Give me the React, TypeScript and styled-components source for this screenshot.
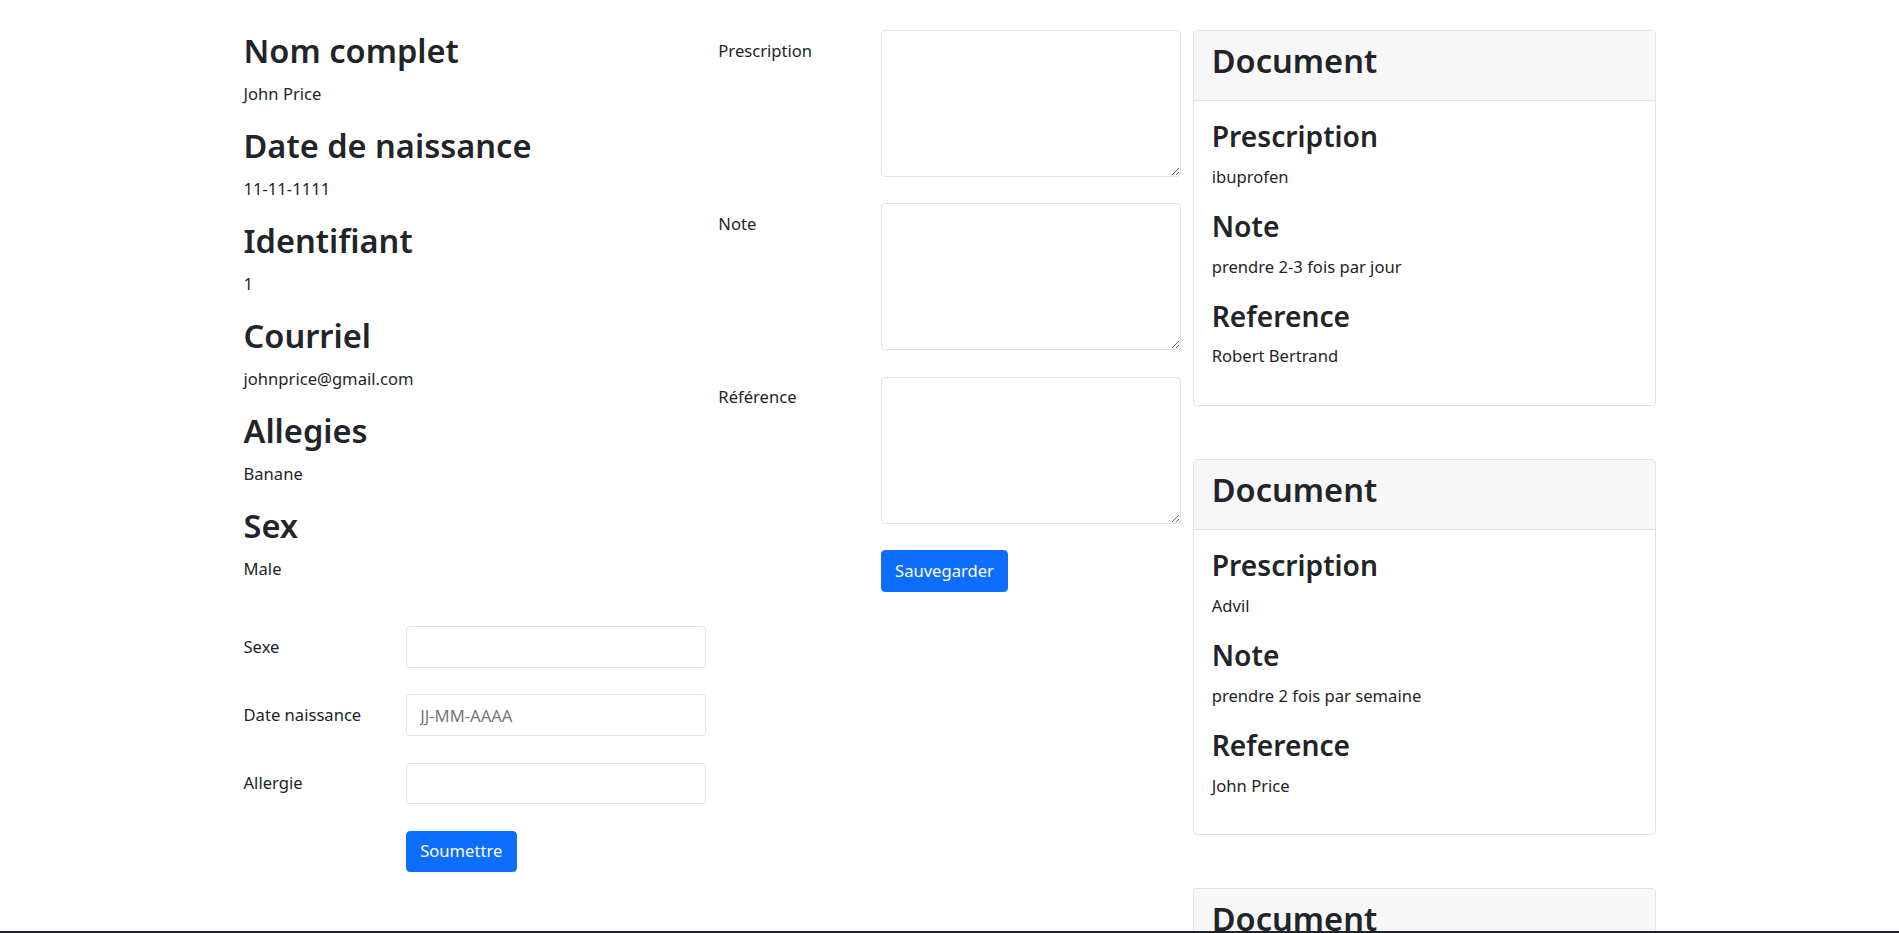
import React from 'react';
import styled, { createGlobalStyle } from 'styled-components';

const GlobalStyle = createGlobalStyle`
  *, *::before, *::after {
    box-sizing: border-box;
  }
  html, body {
    margin: 0;
    padding: 0;
    overflow: hidden;
    background: #fff;
  }
  body {
    font-family: 'Noto Sans', 'Open Sans', sans-serif;
    font-size: 16.6px;
    line-height: 26.4px;
    color: #212529;
  }
`;

const patient = [
  { title: 'Nom complet', value: 'John Price' },
  { title: 'Date de naissance', value: '11-11-1111' },
  { title: 'Identifiant', value: '1' },
  { title: 'Courriel', value: 'johnprice@gmail.com' },
  { title: 'Allegies', value: 'Banane' },
  { title: 'Sex', value: 'Male' },
];

const documents = [
  { prescription: 'ibuprofen', note: 'prendre 2-3 fois par jour', reference: 'Robert Bertrand' },
  { prescription: 'Advil', note: 'prendre 2 fois par semaine', reference: 'John Price' },
  { prescription: 'Tylenol', note: 'prendre 1 fois par jour', reference: 'Robert Bertrand' },
];

const App: React.FC = () => {
  return (
    <>
      <GlobalStyle />
      <Page>
        <Column>
          {patient.map((p) => (
            <section key={p.title}>
              <InfoTitle>{p.title}</InfoTitle>
              <InfoValue>{p.value}</InfoValue>
            </section>
          ))}
          <Form>
            <FormRow>
              <Label htmlFor="sexe">Sexe</Label>
              <Input id="sexe" type="text" />
            </FormRow>
            <FormRow>
              <Label htmlFor="naissance">Date naissance</Label>
              <Input id="naissance" type="text" placeholder="JJ-MM-AAAA" />
            </FormRow>
            <FormRow>
              <Label htmlFor="allergie">Allergie</Label>
              <Input id="allergie" type="text" />
            </FormRow>
            <Actions>
              <Button type="button">Soumettre</Button>
            </Actions>
          </Form>
        </Column>

        <Column>
          <FormRow>
            <Label htmlFor="prescription">Prescription</Label>
            <TextArea id="prescription" rows={5} />
          </FormRow>
          <FormRow>
            <Label htmlFor="note">Note</Label>
            <TextArea id="note" rows={5} />
          </FormRow>
          <FormRow>
            <Label htmlFor="reference">Référence</Label>
            <TextArea id="reference" rows={5} />
          </FormRow>
          <Actions>
            <Button type="button">Sauvegarder</Button>
          </Actions>
        </Column>

        <CardList>
          {documents.map((d, i) => (
            <Card key={i}>
              <CardHeader>
                <InfoTitle>Document</InfoTitle>
              </CardHeader>
              <CardBody>
                <FieldTitle>Prescription</FieldTitle>
                <InfoValue>{d.prescription}</InfoValue>
                <FieldTitle>Note</FieldTitle>
                <InfoValue>{d.note}</InfoValue>
                <FieldTitle>Reference</FieldTitle>
                <InfoValue>{d.reference}</InfoValue>
              </CardBody>
            </Card>
          ))}
        </CardList>
      </Page>
      <BottomEdge />
    </>
  );
};

const Page = styled.main`
  width: 1412px;
  margin: 0 auto;
  padding-top: 30px;
  display: grid;
  grid-template-columns: repeat(3, 1fr);
  column-gap: 12.5px;
  align-items: start;
`;

const Column = styled.div`
  display: flex;
  flex-direction: column;
`;

const InfoTitle = styled.h2`
  margin: 0 0 8.8px;
  font-size: 32.6px;
  font-weight: 600;
  line-height: 42.24px;
`;

const InfoValue = styled.p`
  margin: 0 0 17.6px;
`;

const FieldTitle = styled.h3`
  margin: 0 0 8.8px;
  font-size: 28.2px;
  font-weight: 600;
  line-height: 36.96px;
`;

const Form = styled.form`
  margin-top: 26px;
`;

const FormRow = styled.div`
  display: grid;
  grid-template-columns: 150px 1fr;
  column-gap: 12.5px;
  margin-bottom: 26.4px;
  align-items: start;
`;

const Label = styled.label`
  padding-top: 7.5px;
`;

const fieldBase = `
  display: block;
  width: 100%;
  padding: 6.6px 13.2px;
  font-family: inherit;
  font-size: 16.6px;
  line-height: 26.4px;
  color: #212529;
  background: #fff;
  border: 1px solid #dee2e6;
  border-radius: 4.1px;
  outline: none;
  &::placeholder {
    color: rgba(33, 37, 41, 0.65);
  }
`;

const Input = styled.input`
  ${fieldBase}
  height: 41.8px;
`;

const TextArea = styled.textarea`
  ${fieldBase}
  height: 147px;
  resize: vertical;
`;

const Actions = styled.div`
  padding-left: 162.5px;
  display: flex;
`;

const Button = styled.button`
  padding: 6.6px 13.2px;
  font-family: inherit;
  font-size: 16.6px;
  line-height: 26.4px;
  color: #fff;
  background: #0d6efd;
  border: 1px solid #0d6efd;
  border-radius: 4.1px;
  cursor: pointer;
`;

const CardList = styled.div`
  display: flex;
  flex-direction: column;
  gap: 53px;
`;

const Card = styled.article`
  border: 1px solid #dee2e6;
  border-radius: 4.1px;
  overflow: hidden;
`;

const CardHeader = styled.header`
  padding: 8.8px 17.6px;
  background: #f7f7f7;
  border-bottom: 1px solid #dee2e6;
`;

const CardBody = styled.div`
  padding: 17.6px;
`;

const BottomEdge = styled.div`
  position: fixed;
  left: 0;
  right: 0;
  bottom: 0;
  height: 2px;
  background: #202124;
`;

export default App;
